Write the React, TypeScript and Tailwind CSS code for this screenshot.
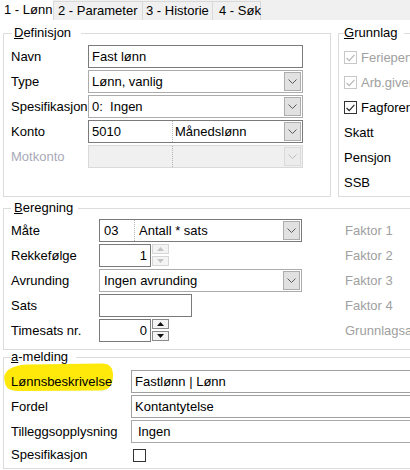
import React from 'react'

function Caret({ disabled }: { disabled?: boolean }) {
  return (
    <span
      className={`ml-auto mr-[1px] flex h-[19px] w-[17px] shrink-0 items-center justify-center border ${
        disabled ? 'border-[#dadada] bg-[#ececec]' : 'border-[#adadad] bg-[#e1e1e1]'
      }`}
    >
      <svg width="9" height="5" viewBox="0 0 9 5">
        <path d="M0.5 0.5 L4.5 4.5 L8.5 0.5" fill="none" stroke={disabled ? '#bdbdbd' : '#5a5a5a'} strokeWidth="1" />
      </svg>
    </span>
  )
}

function Sep() {
  return <span className="h-full w-0 shrink-0 border-l border-dotted border-[#b4b4b4]" />
}

function SpinBtn({ up, enabled }: { up?: boolean; enabled?: boolean }) {
  return (
    <span
      className={`flex h-[10px] w-[17px] items-center justify-center border ${
        enabled ? 'border-[#8a8a8a] bg-[#f3f3f3]' : 'border-[#d6d6d6] bg-[#f4f4f4]'
      }`}
    >
      <svg width="7" height="4" viewBox="0 0 7 4">
        <path d={up ? 'M0 4 L3.5 0 L7 4 Z' : 'M0 0 L3.5 4 L7 0 Z'} fill={enabled ? '#111' : '#c4c4c4'} />
      </svg>
    </span>
  )
}

function Spin({ value, enabled }: { value: string; enabled?: boolean }) {
  return (
    <div className="flex h-full items-start gap-[1px]">
      <div className="flex h-[23px] w-[52px] items-center justify-end border border-[#7a7a7a] pr-[3px]">{value}</div>
      <div className="flex flex-col gap-[2px]">
        <SpinBtn up enabled={enabled} />
        <SpinBtn enabled={enabled} />
      </div>
    </div>
  )
}

function Check({ label, disabled, checked }: { label: string; disabled?: boolean; checked?: boolean }) {
  return (
    <div className="flex h-[25px] items-center whitespace-nowrap">
      <span
        className={`flex h-[13px] w-[13px] shrink-0 items-center justify-center border bg-white ${
          disabled ? 'border-[#c8c8c8]' : 'border-[#333333]'
        }`}
      >
        {checked && (
          <svg width="9" height="8" viewBox="0 0 9 8">
            <path d="M0.6 4 L3.2 6.7 L8.4 0.8" fill="none" stroke={disabled ? '#b5b5b5' : '#222'} strokeWidth="1.1" />
          </svg>
        )}
      </span>
      <span className={`ml-[4px] ${disabled ? 'text-[#a0a0a0]' : ''}`}>{label}</span>
    </div>
  )
}

export default function App() {
  return (
    <div className="relative h-[470px] w-[410px] overflow-hidden bg-white text-[13px] leading-[16px] text-black font-['Liberation_Sans',Arial,sans-serif]">
      {/* Tabs */}
      <div className="flex h-[20px] bg-[#f0f0f0] whitespace-nowrap">
        <div className="flex w-[53px] items-center bg-white pl-[4px]">1 - Lønn</div>
        <div className="mt-[1px] flex w-[90px] items-center border border-b-0 border-[#d9d9d9] pl-[4px]">2 - Parameter</div>
        <div className="mt-[1px] flex w-[70px] items-center border border-b-0 border-l-0 border-[#d9d9d9] pl-[3px]">3 - Historie</div>
        <div className="mt-[1px] flex w-[48px] items-center border border-b-0 border-l-0 border-[#d9d9d9] pl-[6px]">4 - Søk</div>
      </div>

      <div className="px-[3px]">
        {/* Definisjon + Grunnlag */}
        <div className="mt-[6px] flex gap-[7px]">
          <fieldset className="w-[328px] min-w-0 shrink-0 border border-[#dcdcdc] pb-[28px] pl-[7px] pt-[5px]">
            <legend className="ml-[1px] pl-[2px] pr-[10px] leading-[14px]">
              <span className="underline">D</span>efinisjon
            </legend>
            <div className="flex flex-col gap-[2px] whitespace-nowrap">
              <div className="flex h-[23px] items-center">
                <span className="w-[77px] shrink-0">Navn</span>
                <div className="flex h-full w-[215px] items-center border border-[#7a7a7a] pl-[3px]">Fast lønn</div>
              </div>
              <div className="flex h-[23px] items-center">
                <span className="w-[77px] shrink-0">Type</span>
                <div className="flex h-full w-[215px] items-center border border-[#acacac] pl-[3px]">
                  <span>Lønn, vanlig</span>
                  <Caret />
                </div>
              </div>
              <div className="flex h-[23px] items-center">
                <span className="w-[77px] shrink-0">Spesifikasjon</span>
                <div className="flex h-full w-[215px] items-center border border-[#acacac] pl-[3px]">
                  <span className="whitespace-pre">0:  Ingen</span>
                  <Caret />
                </div>
              </div>
              <div className="flex h-[23px] items-center">
                <span className="w-[77px] shrink-0">Konto</span>
                <div className="flex h-full w-[215px] items-center border border-[#7a7a7a] pl-[3px]">
                  <span className="w-[80px] shrink-0">5010</span>
                  <Sep />
                  <span className="pl-[2px]">Månedslønn</span>
                  <Caret />
                </div>
              </div>
              <div className="flex h-[23px] items-center">
                <span className="w-[77px] shrink-0 text-[#a9a9b8]">Motkonto</span>
                <div className="flex h-full w-[215px] items-center border border-[#d9d9d9] bg-[#f0f0f0] pl-[3px]">
                  <span className="w-[80px] shrink-0" />
                  <Sep />
                  <Caret disabled />
                </div>
              </div>
            </div>
          </fieldset>

          <fieldset className="w-[110px] min-w-0 shrink-0 border border-[#dcdcdc] pl-[5px] pt-[5px]">
            <legend className="pr-[6px] leading-[14px]">
              <span className="underline">G</span>runnlag
            </legend>
            <div className="flex flex-col whitespace-nowrap">
              <Check label="Feriepenger" disabled checked />
              <Check label="Arb.giveravgift" disabled checked />
              <Check label="Fagforening" checked />
              <div className="flex h-[25px] items-center">Skatt</div>
              <div className="flex h-[25px] items-center">Pensjon</div>
              <div className="flex h-[25px] items-center">SSB</div>
            </div>
          </fieldset>
        </div>

        {/* Beregning */}
        <fieldset className="mt-[4px] w-[440px] min-w-0 border border-[#dcdcdc] pb-[7px] pl-[7px] pt-[4px]">
          <legend className="pl-[3px] pr-[5px] leading-[14px]">
            <span className="underline">B</span>eregning
          </legend>
          <div className="flex flex-col gap-[2px] whitespace-nowrap">
            <div className="flex h-[23px] items-center">
              <span className="w-[88px] shrink-0">Måte</span>
              <div className="h-full w-[246px] shrink-0">
                <div className="flex h-full w-[203px] items-center border border-[#7a7a7a] pl-[4px]">
                  <span className="w-[30px] shrink-0">03</span>
                  <Sep />
                  <span className="pl-[4px]">Antall * sats</span>
                  <Caret />
                </div>
              </div>
              <span className="text-[#a0a0a0]">Faktor 1</span>
            </div>
            <div className="flex h-[23px] items-center">
              <span className="w-[88px] shrink-0">Rekkefølge</span>
              <div className="h-full w-[246px] shrink-0">
                <Spin value="1" />
              </div>
              <span className="text-[#a0a0a0]">Faktor 2</span>
            </div>
            <div className="flex h-[23px] items-center">
              <span className="w-[88px] shrink-0">Avrunding</span>
              <div className="h-full w-[246px] shrink-0">
                <div className="flex h-full w-[203px] items-center border border-[#acacac] pl-[4px]">
                  <span>Ingen avrunding</span>
                  <Caret />
                </div>
              </div>
              <span className="text-[#a0a0a0]">Faktor 3</span>
            </div>
            <div className="flex h-[23px] items-center">
              <span className="w-[88px] shrink-0">Sats</span>
              <div className="h-full w-[246px] shrink-0">
                <div className="h-full w-[93px] border border-[#7a7a7a]" />
              </div>
              <span className="text-[#a0a0a0]">Faktor 4</span>
            </div>
            <div className="flex h-[23px] items-center">
              <span className="w-[88px] shrink-0">Timesats nr.</span>
              <div className="h-full w-[246px] shrink-0">
                <Spin value="0" enabled />
              </div>
              <span className="text-[#a0a0a0]">Grunnlagsats</span>
            </div>
          </div>
        </fieldset>

        {/* a-melding */}
        <fieldset className="w-[440px] min-w-0 border border-[#dcdcdc] pb-[3px] pl-[7px] pt-[6px]">
          <legend className="pr-[8px] leading-[14px]">
            <span className="underline">a</span>-melding
          </legend>
          <div className="flex flex-col gap-[2px] whitespace-nowrap">
            <div className="flex h-[23px] items-center">
              <span className="relative w-[120px] shrink-0">
                <svg className="absolute left-[-7px] top-[-12px]" width="110" height="30" viewBox="0 0 110 30">
                  <path
                    d="M1 12 C4 6 12 3 24 2.5 L98 1.5 C106 1.5 109 6 109 13 C109 22 106 28 97 28.5 L18 29 C8 29 2 27.5 1 21 C0 17 0 14 1 12 Z"
                    fill="#ffe90a"
                  />
                </svg>
                <span className="relative">Lønnsbeskrivelse</span>
              </span>
              <div className="flex h-full w-[300px] shrink-0 items-center border border-[#a0a0a0] pl-[3px]">Fastlønn | Lønn</div>
            </div>
            <div className="flex h-[23px] items-center">
              <span className="w-[120px] shrink-0">Fordel</span>
              <div className="flex h-full w-[300px] shrink-0 items-center border border-[#a0a0a0] pl-[3px]">Kontantytelse</div>
            </div>
            <div className="flex h-[23px] items-center">
              <span className="w-[120px] shrink-0">Tilleggsopplysning</span>
              <div className="flex h-full w-[300px] shrink-0 items-center border border-[#a8a8a8] pl-[6px]">Ingen</div>
            </div>
            <div className="flex h-[20px] items-center">
              <span className="w-[120px] shrink-0">Spesifikasjon</span>
              <span className="ml-[2px] h-[13px] w-[13px] border border-[#333333] bg-white" />
            </div>
          </div>
        </fieldset>
      </div>
    </div>
  )
}
